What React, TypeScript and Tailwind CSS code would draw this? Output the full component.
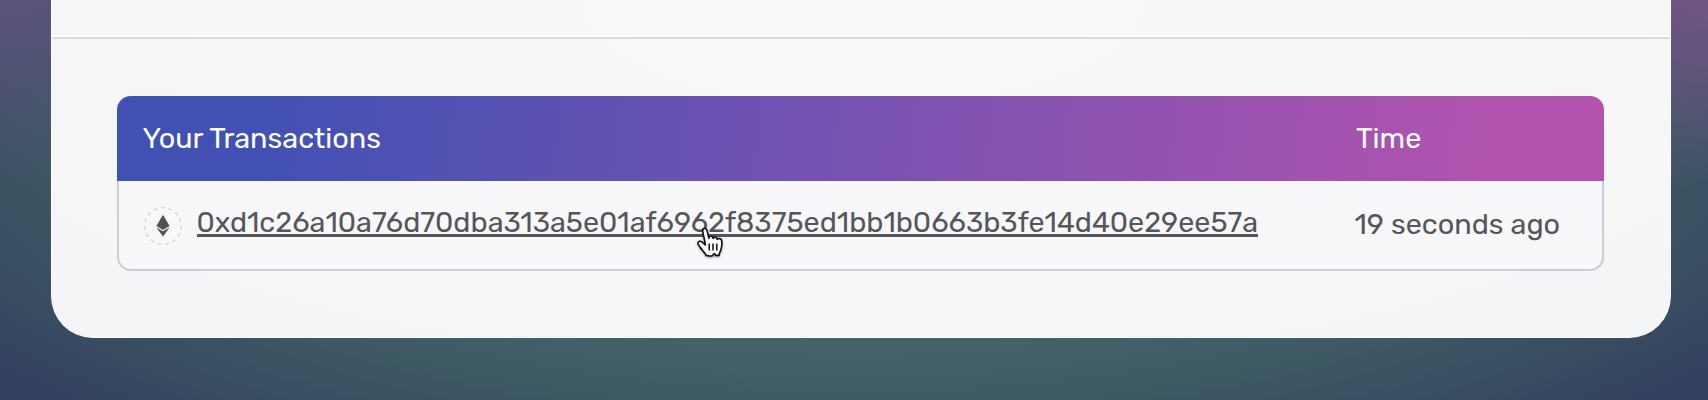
import React from "react";

function EthIcon() {
  return (
    <svg className="mt-[1px] block h-[38px] w-[38px] shrink-0" viewBox="0 0 38 38" fill="none">
      <circle cx="19" cy="19" r="18.3" stroke="#c9c9cc" strokeWidth="1.1" strokeDasharray="3.8 3.8" />
      <path d="M19 7.8 25.6 19.1 19 22.9 12.4 19.1Z" fill="#505255" />
      <path d="M12.4 20.5 19 24.3 25.6 20.5 19 29.6Z" fill="#505255" />
    </svg>
  );
}

function HandCursor() {
  return (
    <svg
      className="absolute left-[499px] top-[21px] h-[32px] w-[30px] drop-shadow-[0_1px_1px_rgba(0,0,0,0.4)]"
      viewBox="0 0 30 32"
      fill="none"
    >
      <path
        d="M10.2 28.4C9.3 26 5.8 23 4 20 2.8 18.3 1.3 16.6 2.2 15.1c1-1.4 3.1-.9 4.5.5l2.7 2.4C8.9 14 7.3 8 6.8 4.6 6.5 2.8 7.2 1.4 8.6 1.3c1.5 0 2.2 1.2 2.6 2.8l1.7 7.1c.2-1.3 1-2 2.2-1.9 1.2 0 1.9.8 2.1 2.2.4-1 1.2-1.5 2.2-1.3 1.2.1 1.8 1 1.9 2.2.5-.7 1.4-1 2.3-.8 1.5.3 2.3 1.5 2.3 3.6 0 4-.3 6.3-1.4 8.6-.8 1.6-1.5 2.7-1.4 4.6h-3.1l-1.8-1.9-2.2 2.5h-2.2l-3.6-.6Z"
        fill="white"
        stroke="#111"
        strokeWidth="1.6"
        strokeLinejoin="round"
      />
      <path d="M13.2 16.5v7M17 16.5v7M20.8 16.5v7" stroke="#111" strokeWidth="1.5" />
    </svg>
  );
}

export default function App() {
  return (
    <div className="h-[400px] w-[1708px] overflow-hidden bg-[radial-gradient(ellipse_220px_210px_at_1708px_-20px,#79568a_0%,#79568a00_100%),radial-gradient(ellipse_280px_210px_at_0px_-20px,#5f537e_0%,#5f537e00_100%),radial-gradient(ellipse_1080px_400px_at_854px_130px,#4b6f6d_0%,#446569_50%,#3d5964_72%,#33415f_100%)] pl-[50.5px] font-['Rubik','Roboto',sans-serif] text-[28.8px] leading-[32px]">
      <main className="h-[338px] w-[1620px] overflow-hidden rounded-b-[42px] border-x border-b border-white bg-[radial-gradient(ellipse_1100px_410px_at_50%_0%,#f8f9fb_0%,#f7f8f9_50%,#f6f6f6_72%,#f5f6f6_86%,#f3f5f7_100%)]">
        <div className="h-[37px] border-b-2 border-white" />
        <section className="border-t-2 border-[#d9d9db] px-[65.5px] pt-[57px]">
          <div className="w-[1487px]">
            <header className="flex h-[85px] items-center rounded-t-[14px] bg-[linear-gradient(97deg,#4051b3_0%,#4051b3_9%,#b153af_92%,#b153af_100%)] pb-[2px] pl-[25.5px] text-white">
              <div className="w-[1213.5px]">Your Transactions</div>
              <div>Time</div>
            </header>
            <div className="flex h-[90px] items-start rounded-b-[14px] border-x-2 border-b-2 border-[#cbccd4] bg-[#f8f8fb] pl-[25px] pt-[25px] text-[#55565a]">
              <EthIcon />
              <div className="relative ml-[14.5px] w-[1158px]">
                <a className="block h-[31px] w-fit whitespace-nowrap border-b-[3px] border-[#55565a]">
                  0xd1c26a10a76d70dba313a5e01af6962f8375ed1bb1b0663b3fe14d40e29ee57a
                </a>
                <HandCursor />
              </div>
              <div className="mt-[2px] whitespace-nowrap">19 seconds ago</div>
            </div>
          </div>
        </section>
      </main>
    </div>
  );
}
